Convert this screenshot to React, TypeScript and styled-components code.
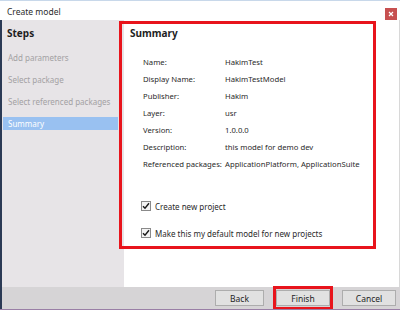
import styled, { createGlobalStyle } from 'styled-components';

const GlobalStyle = createGlobalStyle`
  html, body {
    margin: 0;
    padding: 0;
    background: #ffffff;
  }
  body {
    font-family: 'Noto Sans', 'Open Sans', sans-serif;
    color: #1e1e1e;
  }
`;

const Window = styled.div`
  width: 400px;
  height: 310px;
  display: flex;
  flex-direction: column;
  overflow: hidden;
  background: #ffffff;
  border-bottom: 1px solid #9a7fa6;
  box-sizing: border-box;
`;

const TitleBar = styled.div`
  height: 20px;
  display: flex;
  align-items: center;
  justify-content: space-between;
  padding: 0 3px 0 7px;
  background: #ffffff;
  border-top: 1px solid #c8d8ea;
  box-sizing: border-box;
`;

const Title = styled.span`
  font-size: 8.5px;
  color: #2b2b2b;
  margin-top: 2px;
`;

const CloseButton = styled.div`
  width: 12px;
  height: 12px;
  margin-top: 6px;
  background: #c75050;
  display: flex;
  align-items: center;
  justify-content: center;
`;

const Body = styled.div`
  flex: 1;
  display: flex;
  border-left: 2px solid #2b3a55;
  border-right: 1px solid #d8d8d8;
`;

const Sidebar = styled.div`
  width: 122px;
  background: #e7e4e7;
  display: flex;
  flex-direction: column;
  padding-top: 7px;
`;

const StepsHeading = styled.div`
  font-size: 10px;
  font-weight: 700;
  color: #1e1e1e;
  padding-left: 5px;
  height: 12px;
  line-height: 12px;
  margin-bottom: 12px;
`;

const StepItem = styled.div<{ $active?: boolean }>`
  font-size: 8px;
  height: 13px;
  line-height: 13px;
  margin: 0 6px 9px 1px;
  padding-left: 5px;
  white-space: nowrap;
  color: ${(p) => (p.$active ? '#ffffff' : '#a3a1a3')};
  background: ${(p) => (p.$active ? '#99c1f1' : 'transparent')};
`;

const Content = styled.div`
  flex: 1;
  background: #ffffff;
  display: flex;
  flex-direction: column;
`;

const SummaryPanel = styled.div`
  margin: 1px 23px 0 -5px;
  height: 228px;
  border: 3px solid #e8141c;
  box-sizing: border-box;
  padding: 2px 0 0 8px;
  display: flex;
  flex-direction: column;
`;

const PanelTitle = styled.div`
  font-size: 10px;
  font-weight: 700;
  height: 14px;
  line-height: 14px;
  color: #1e1e1e;
`;

const InfoGrid = styled.div`
  display: grid;
  grid-template-columns: 80px auto;
  column-gap: 2px;
  grid-auto-rows: 17px;
  align-items: center;
  margin: 13px 0 0 13px;
  font-size: 7.7px;
  color: #2a2a2a;
  white-space: nowrap;
`;

const CheckList = styled.div`
  display: flex;
  flex-direction: column;
  gap: 15px;
  margin: 28px 0 0 11px;
`;

const CheckRow = styled.label`
  display: flex;
  align-items: center;
  gap: 4px;
  font-size: 8px;
  height: 12px;
  color: #2a2a2a;
`;

const Box = styled.span`
  width: 10px;
  height: 10px;
  border: 1px solid #8a8a8a;
  background: #f4f4f4;
  box-sizing: border-box;
  display: flex;
  align-items: center;
  justify-content: center;
`;

const Footer = styled.div`
  height: 22px;
  background: #d6d4d6;
  border-left: 2px solid #2b3a55;
  display: flex;
  align-items: center;
  justify-content: flex-end;
  padding-right: 4px;
  gap: 9px;
`;

const Button = styled.div<{ $w: number }>`
  width: ${(p) => p.$w}px;
  height: 16px;
  box-sizing: border-box;
  border: 1px solid #adadad;
  background: #e1e1e1;
  font-size: 8.5px;
  color: #1e1e1e;
  display: flex;
  align-items: center;
  justify-content: center;
`;

const Highlight = styled.div`
  border: 3px solid #e8141c;
  padding: 1px 0;
  display: flex;
`;

const steps = ['Add parameters', 'Select package', 'Select referenced packages'];

const info: Array<[string, string]> = [
  ['Name:', 'HakimTest'],
  ['Display Name:', 'HakimTestModel'],
  ['Publisher:', 'Hakim'],
  ['Layer:', 'usr'],
  ['Version:', '1.0.0.0'],
  ['Description:', 'this model for demo dev'],
  ['Referenced packages:', 'ApplicationPlatform, ApplicationSuite'],
];

function Check() {
  return (
    <svg width="8" height="8" viewBox="0 0 8 8">
      <path d="M1 4.2 L3 6.3 L7 1.2" fill="none" stroke="#1a1a1a" strokeWidth="1.4" />
    </svg>
  );
}

export default function App() {
  return (
    <>
      <GlobalStyle />
      <Window>
        <TitleBar>
          <Title>Create model</Title>
          <CloseButton>
            <svg width="6" height="6" viewBox="0 0 6 6">
              <path d="M1 1 L5 5 M5 1 L1 5" stroke="#ffffff" strokeWidth="1.2" />
            </svg>
          </CloseButton>
        </TitleBar>
        <Body>
          <Sidebar>
            <StepsHeading>Steps</StepsHeading>
            {steps.map((s) => (
              <StepItem key={s}>{s}</StepItem>
            ))}
            <StepItem $active>Summary</StepItem>
          </Sidebar>
          <Content>
            <SummaryPanel>
              <PanelTitle>Summary</PanelTitle>
              <InfoGrid>
                {info.map(([label, value]) => (
                  <>
                    <span key={label}>{label}</span>
                    <span key={value}>{value}</span>
                  </>
                ))}
              </InfoGrid>
              <CheckList>
                <CheckRow>
                  <Box>
                    <Check />
                  </Box>
                  Create new project
                </CheckRow>
                <CheckRow>
                  <Box>
                    <Check />
                  </Box>
                  Make this my default model for new projects
                </CheckRow>
              </CheckList>
            </SummaryPanel>
          </Content>
        </Body>
        <Footer>
          <Button $w={49}>Back</Button>
          <Highlight>
            <Button $w={54}>Finish</Button>
          </Highlight>
          <Button $w={54}>Cancel</Button>
        </Footer>
      </Window>
    </>
  );
}
